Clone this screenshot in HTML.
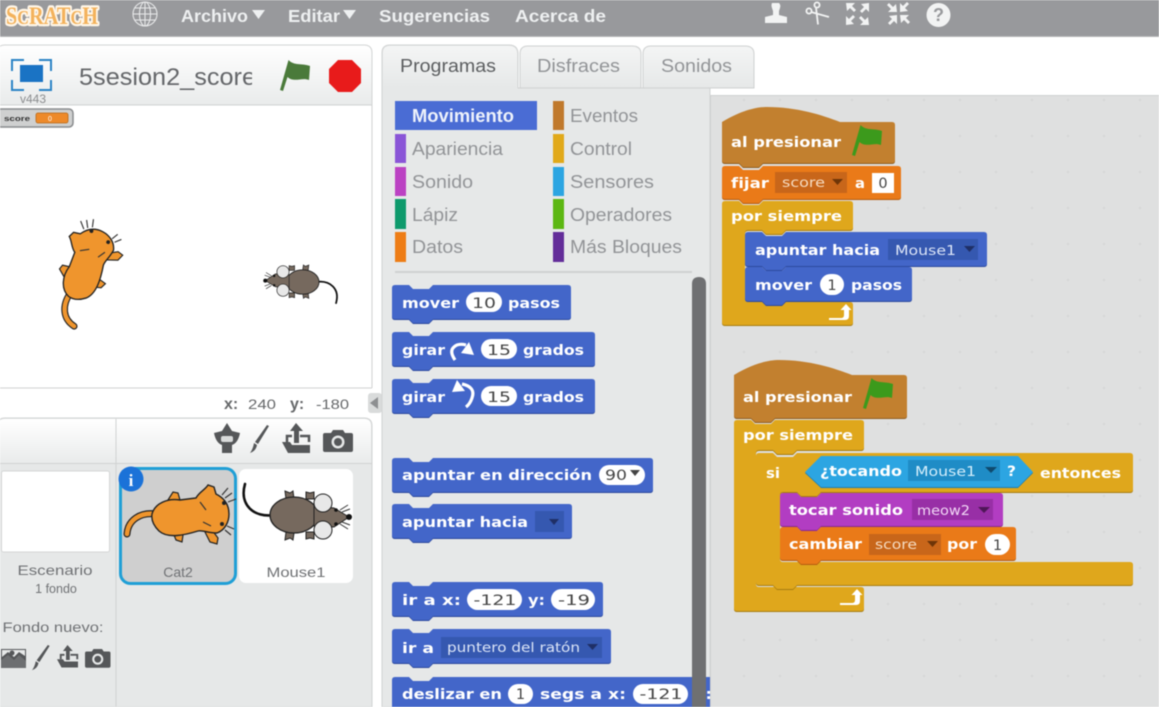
<!DOCTYPE html>
<html lang="es">
<head>
<meta charset="utf-8">
<title>Scratch</title>
<style>
html,body{margin:0;padding:0;width:1159px;height:707px;overflow:hidden;background:#fff}
svg{display:block;filter:blur(.5px)}
text{font-family:"Liberation Sans",sans-serif}
.b{font-family:"DejaVu Sans",sans-serif;font-weight:700;font-size:14px;fill:#fff}
.f{font-family:"DejaVu Sans",sans-serif;font-size:14.500px;fill:#444;text-anchor:middle}
.d{font-family:"DejaVu Sans",sans-serif;font-size:13px}
.m{font-weight:700;font-size:17.500px;fill:#eef0f1}
.c{font-size:18px;fill:#929497}
.l{font-size:14px;fill:#707275;text-anchor:middle}
.mo{filter:drop-shadow(.5px 1px 0 #2d4a9e)}
.ev{filter:drop-shadow(.5px 1px 0 #8f5e22)}
.or{filter:drop-shadow(.5px 1px 0 #b35c10)}
.co{filter:drop-shadow(.5px 1px 0 #a67c12)}
.so{filter:drop-shadow(.5px 1px 0 #86298f)}
.se{filter:drop-shadow(.5px 1px 0 #1c7cb0)}
</style>
</head>
<body>
<svg width="1159" height="707" viewBox="0 0 1159 707" xmlns="http://www.w3.org/2000/svg">
<defs>
<linearGradient id="hd" x1="0" y1="0" x2="0" y2="1"><stop offset="0" stop-color="#fff"/><stop offset="1" stop-color="#e9ebeb"/></linearGradient>
<linearGradient id="tb" x1="0" y1="0" x2="0" y2="1"><stop offset="0" stop-color="#f4f5f5"/><stop offset="1" stop-color="#e6e8e8"/></linearGradient>
<pattern id="dots" width="36" height="36" patternUnits="userSpaceOnUse" x="6" y="10"><rect width="36" height="36" fill="#dfe0e0"/><rect x="17" y="17" width="2" height="2" fill="#d5d6d6"/></pattern>
<clipPath id="tc"><rect x="70" y="50" width="182" height="50"/></clipPath>
<clipPath id="pal"><rect x="382" y="88" width="328" height="619"/></clipPath>
<path id="flag" d="M0,0L8.500,-30C14,-24 22,-27 30,-24L29,-10C22,-13 14,-7 7.500,-13L3,1Z"/>
<path id="loop" d="M0,13h12q3 0 3-3V5h-3.500l5.500-6 5.500 6H20v6q0 4-4 4H0z" fill="#fff"/>
<g id="cam" fill="#555759"><path d="M8,3l2-3h10l2 3h6q2 0 2 2v15q0 2-2 2H2q-2 0-2-2V5q0-2 2-2z"/><circle cx="15" cy="12" r="6.500" fill="#e6e8e8"/><circle cx="15" cy="12" r="4" fill="#555759"/></g>
<g id="upl"><path d="M14,0L21,8H17V20H12V8H8z" fill="#555759"/><path d="M10,13H5V19M18,13H27V19" fill="none" stroke="#555759" stroke-width="2.500"/><path d="M0,19H8L10,22H28V30H6z" fill="#555759"/></g>
<path id="brush" d="M17,0L19,1 8,19 5,17zM4,18l3,2Q6,26 0,28Q3,24 4,18z" fill="#555759"/>
<g id="cat">
<path d="M127,534C128,520 140,512 156,514" fill="none" stroke="#222" stroke-width="7" stroke-linecap="round"/>
<path d="M127,534C128,520 140,512 156,514" fill="none" stroke="#ef952d" stroke-width="4.600" stroke-linecap="round"/>
<path d="M168,500l5-8 5,1 2,7zM172,530l4,10 6,2 1-7zM205,532l5,10 7,2 1-6-6-8z" fill="#ef952d" stroke="#222" stroke-width="1.200"/>
<path d="M152,514C155,503 168,498 180,500L196,498C199,492 205,490 208,485L214,487 216,494C224,498 229,504 229,514 229,522 225,530 217,533 208,533 203,530 198,531 185,535 168,539 159,531 154,526 151,520 152,514Z" fill="#ef952d" stroke="#222" stroke-width="1.400"/>
<path d="M200,502l6,8M203,522l8,4M225,498l7-5M228,502l8-3M227,526l7,3M225,530l6,5M222,495l6-7" stroke="#333" stroke-width="1.200" fill="none"/>
<circle cx="224" cy="503" r="2" fill="#222"/><circle cx="222" cy="524" r="2" fill="#222"/>
</g>
<g id="mouse">
<path d="M245,484C239,505 254,518 274,515" fill="none" stroke="#111" stroke-width="2.600" stroke-linecap="round"/>
<path d="M286,499l-1-8 5 2 3-2 1 8zM306,499l0-7 4 1 4-1 0 7zM286,532l-1 8 5-2 3 2 1-7zM306,532l0 7 4-1 4 1 0-7z" fill="#76695e" stroke="#222" stroke-width="1"/>
<ellipse cx="294" cy="515" rx="24" ry="18" fill="#76695e" stroke="#222" stroke-width="1.300"/>
<path d="M314,506L334,508 349,517 334,527 314,526Z" fill="#76695e" stroke="#222" stroke-width="1"/>
<circle cx="323" cy="503" r="9" fill="#e8e8e8" stroke="#222" stroke-width="1"/>
<circle cx="323" cy="530" r="9" fill="#e8e8e8" stroke="#222" stroke-width="1"/>
<circle cx="349" cy="517" r="3" fill="#111"/><circle cx="336" cy="510" r="1.800" fill="#111"/><circle cx="336" cy="524" r="1.800" fill="#111"/>
<path d="M340,510l8-5M342,512l8-3M340,524l8 5M342,522l8 3" stroke="#333" stroke-width="1"/>
</g>
</defs>

<!-- top bar -->
<rect width="1159" height="36" fill="#98999c"/>
<rect y="36" width="1159" height="1" fill="#b5b6b8"/>
<text x="6" y="24" font-size="25" textLength="92" lengthAdjust="spacingAndGlyphs" style="font-family:'Liberation Serif',serif;font-weight:700;fill:#f3b25c;stroke:#fff6e8;stroke-width:4.500;paint-order:stroke;stroke-linejoin:round">S<tspan font-size="20">C</tspan>RAT<tspan font-size="20">C</tspan>H</text>
<g fill="none" stroke="#e8e9ea" stroke-width="1.100"><circle cx="145" cy="14" r="12"/><ellipse cx="145" cy="14" rx="5.500" ry="12"/><path d="M145,2v24M133,14h24M135,8h20M135,20h20"/></g>
<text class="m" x="181" y="22" textLength="67" lengthAdjust="spacingAndGlyphs">Archivo</text>
<path d="M252,10h13l-6.500,9z" fill="#eef0f1"/>
<text class="m" x="288" y="22" textLength="52" lengthAdjust="spacingAndGlyphs">Editar</text>
<path d="M343,10h13l-6.500,9z" fill="#eef0f1"/>
<text class="m" x="379" y="22" textLength="111" lengthAdjust="spacingAndGlyphs">Sugerencias</text>
<text class="m" x="515" y="22" textLength="91" lengthAdjust="spacingAndGlyphs">Acerca de</text>
<!-- tool icons -->
<g fill="#f2f3f3">
<path d="M772,3h7q2 2 1 5l-1 3v4l8 2v6h-22v-6l8-2v-4l-1-3q-1-3 0-5z"/>
<g fill="none" stroke="#f2f3f3" stroke-width="1.800"><circle cx="809" cy="11" r="2.600"/><circle cx="817" cy="5" r="2.600"/><path d="M811,12l18 5M816,7.500l2 17"/></g>
<path d="M846,3h9l-3 3 4 4-2 2-4-4-3 3zM869,3v9l-3-3-4 4-2-2 4-4-3-3zM846,25v-9l3 3 4-4 2 2-4 4 3 3zM869,25h-9l3-3-4-4 2-2 4 4 3-3z"/>
<path d="M897,12h-9l3-3-4-4 2-2 4 4 3-3zM900,12V3l3 3 4-4 2 2-4 4 3 3zM897,15v9l-3-3-4 4-2-2 4-4-3-3zM900,15h9l-3 3 4 4-2 2-4-4-3 3z"/>
<circle cx="938.500" cy="15" r="12"/>
</g>
<text x="938.500" y="21" font-size="18" font-weight="700" text-anchor="middle" fill="#98999c">?</text>

<!-- stage panel -->
<path d="M-3,105V53q0-8 8-8H364q8 0 8 8V105z" fill="url(#hd)" stroke="#d2d4d4"/>
<rect x="-1" y="105" width="373" height="283" fill="#fff"/>
<path d="M0,105H372M372,105V388M0,388H372" stroke="#d0d2d2" fill="none"/>
<rect x="20" y="65" width="23" height="17" fill="#1a73c4"/>
<path d="M12,71V60H24M39,60H51V71M12,80V90H24M39,90H51V80" fill="none" stroke="#2b84c6" stroke-width="2"/>
<text x="33" y="103" font-size="12" text-anchor="middle" fill="#8a8c8e">v443</text>
<g clip-path="url(#tc)"><text x="79" y="85" font-size="24" fill="#65676a" textLength="177" lengthAdjust="spacingAndGlyphs">5sesion2_score</text></g>
<use href="#flag" x="280" y="90" fill="#4a7a3a"/>
<path d="M338,60h14l9,9v14l-9,9h-14l-9-9V69z" fill="#e81b1b"/>
<rect x="-3" y="109" width="76" height="18" rx="4" fill="#cfd0d0" stroke="#8a8c8e" stroke-width="1.500"/>
<text x="4" y="121" font-size="7" font-weight="700" fill="#333" textLength="26" lengthAdjust="spacingAndGlyphs">score</text>
<rect x="36" y="113" width="32" height="10" rx="2" fill="#ee8a2a" stroke="#b86a1a" stroke-width=".8"/>
<text x="50" y="121" font-size="7" fill="#fff" text-anchor="middle">0</text>

<use href="#cat" transform="translate(81,275) rotate(-62) scale(.95) translate(-178,-515)"/>
<use href="#mouse" transform="translate(300,282) rotate(180) scale(.68) translate(-298,-515)"/>

<text x="224" y="409" font-size="16" font-weight="700" fill="#66686a">x:</text>
<text x="248" y="409" font-size="14" fill="#66686a" textLength="28" lengthAdjust="spacingAndGlyphs">240</text>
<text x="290" y="409" font-size="16" font-weight="700" fill="#66686a">y:</text>
<text x="316" y="409" font-size="14" fill="#66686a" textLength="33" lengthAdjust="spacingAndGlyphs">-180</text>
<rect x="368" y="393" width="14" height="20" rx="3" fill="#d9dbdb"/>
<path d="M378,397v12l-8-6z" fill="#8d8f91"/>

<!-- sprites panel -->
<path d="M-3,707V426q0-8 8-8H364q8 0 8 8V707z" fill="#e6e8e8" stroke="#d0d2d2"/>
<path d="M-2,463V426q0-7 7-7H364q7 0 7 7V463z" fill="url(#hd)"/>
<path d="M0,463.500H372M116,419V707" stroke="#d0d2d2"/>
<!-- sprite toolbar icons -->
<path d="M227,423L232,431 240,433Q238,443 232,445L232,453H222L222,445Q216,443 214,433L222,431z" fill="#555759"/>
<rect x="221" y="436" width="12" height="6" rx="2" fill="#d9dbdb"/>
<use href="#brush" x="250" y="425"/>
<use href="#upl" x="282" y="423"/>
<use href="#cam" x="323" y="430"/>

<rect x="1.500" y="471" width="108" height="81" rx="2" fill="#fff" stroke="#d4d6d6"/>
<text class="l" x="55" y="575" textLength="75" lengthAdjust="spacingAndGlyphs">Escenario</text>
<text x="56" y="593" font-size="12.500" fill="#707275" text-anchor="middle">1 fondo</text>
<text x="53" y="632" font-size="14" fill="#707275" text-anchor="middle" textLength="101" lengthAdjust="spacingAndGlyphs">Fondo nuevo:</text>
<rect x="1" y="649" width="25" height="19" fill="#555759"/>
<path d="M1,668V660l7-5 6,5 5-5 7,6v7z" fill="#6d6f71"/><path d="M2,650h23v6l-6-4-5 5-6-5-6 5z" fill="#e6e8e8"/><circle cx="12" cy="653" r="2.500" fill="#555759"/>
<use href="#brush" transform="translate(32,645) scale(.93,.9)"/>
<use href="#upl" transform="translate(57,645) scale(.75)"/>
<use href="#cam" transform="translate(85,649) scale(.85)"/>

<rect x="120.500" y="468.500" width="115" height="115" rx="10" fill="#cfcfcf" stroke="#1f9fd6" stroke-width="3"/>
<use href="#cat"/>
<text class="l" x="178" y="577">Cat2</text>
<circle cx="131" cy="479" r="12.500" fill="#1b72d8"/>
<text x="131" y="486" font-size="17" font-weight="700" text-anchor="middle" fill="#fff" style="font-family:'Liberation Serif',serif">i</text>
<rect x="239" y="469" width="114" height="114" rx="7" fill="#fff"/>
<use href="#mouse"/>
<text class="l" x="296" y="577" textLength="59" lengthAdjust="spacingAndGlyphs">Mouse1</text>

<!-- tabs -->
<path d="M382,707V53q0-8 8-8H509q9 0 9 9V88H710V707z" fill="#e6e8e8" stroke="#d0d2d2"/>
<path d="M383,88V53q0-7 7-7H509q8 0 8 8V88z" fill="url(#tb)"/>
<path d="M520,88V54q0-8 8-8H632q9 0 9 8V88z" fill="url(#tb)" stroke="#cfd1d1"/>
<path d="M643,88V54q0-8 8-8H745q9 0 9 8V88z" fill="url(#tb)" stroke="#cfd1d1"/>
<text x="400" y="72" font-size="18" fill="#5c5e60" textLength="96" lengthAdjust="spacingAndGlyphs">Programas</text>
<text x="537" y="72" font-size="18" fill="#929497" textLength="83" lengthAdjust="spacingAndGlyphs">Disfraces</text>
<text x="661" y="72" font-size="18" fill="#929497" textLength="71" lengthAdjust="spacingAndGlyphs">Sonidos</text>

<!-- categories -->
<rect x="395" y="101" width="142" height="29" fill="#4a6cd4"/>
<text x="412" y="122" font-size="18" font-weight="700" fill="#eef2fb" textLength="102" lengthAdjust="spacingAndGlyphs">Movimiento</text>
<rect x="395" y="134" width="11" height="29" fill="#8a55d7"/><text class="c" x="412" y="155" textLength="91" lengthAdjust="spacingAndGlyphs">Apariencia</text>
<rect x="395" y="167" width="11" height="29" fill="#bb42c3"/><text class="c" x="412" y="188" textLength="61" lengthAdjust="spacingAndGlyphs">Sonido</text>
<rect x="395" y="199" width="11" height="30" fill="#0e9a6c"/><text class="c" x="412" y="221" textLength="46" lengthAdjust="spacingAndGlyphs">Lápiz</text>
<rect x="395" y="232" width="11" height="30" fill="#ee7d16"/><text class="c" x="412" y="253" textLength="51" lengthAdjust="spacingAndGlyphs">Datos</text>
<rect x="553" y="101" width="11" height="29" fill="#c0792c"/><text class="c" x="570" y="122" textLength="68" lengthAdjust="spacingAndGlyphs">Eventos</text>
<rect x="553" y="134" width="11" height="29" fill="#e1a91a"/><text class="c" x="570" y="155" textLength="62" lengthAdjust="spacingAndGlyphs">Control</text>
<rect x="553" y="167" width="11" height="29" fill="#2ca5e2"/><text class="c" x="570" y="188" textLength="84" lengthAdjust="spacingAndGlyphs">Sensores</text>
<rect x="553" y="199" width="11" height="30" fill="#5cb712"/><text class="c" x="570" y="221" textLength="102" lengthAdjust="spacingAndGlyphs">Operadores</text>
<rect x="553" y="232" width="11" height="30" fill="#632d99"/><text class="c" x="570" y="253" textLength="112" lengthAdjust="spacingAndGlyphs">Más Bloques</text>
<rect x="395" y="271" width="297" height="2" fill="#cfd1d1"/>

<!-- palette blocks -->
<g clip-path="url(#pal)">
<g fill="#4366c9">
<path class="mo" transform="translate(392,285)" d="M0,3q0-3 3-3h14l4 4h16l4-4h135q3 0 3 3v28q0 3-3 3H41l-4 4h-16l-4-4H3q-3 0-3-3z"/>
<path class="mo" transform="translate(392,332)" d="M0,3q0-3 3-3h14l4 4h16l4-4h159q3 0 3 3v28q0 3-3 3H41l-4 4h-16l-4-4H3q-3 0-3-3z"/>
<path class="mo" transform="translate(392,379)" d="M0,3q0-3 3-3h14l4 4h16l4-4h159q3 0 3 3v28q0 3-3 3H41l-4 4h-16l-4-4H3q-3 0-3-3z"/>
<path class="mo" transform="translate(392,458)" d="M0,3q0-3 3-3h14l4 4h16l4-4h217q3 0 3 3v28q0 3-3 3H41l-4 4h-16l-4-4H3q-3 0-3-3z"/>
<path class="mo" transform="translate(392,504)" d="M0,3q0-3 3-3h14l4 4h16l4-4h136q3 0 3 3v28q0 3-3 3H41l-4 4h-16l-4-4H3q-3 0-3-3z"/>
<path class="mo" transform="translate(392,582)" d="M0,3q0-3 3-3h14l4 4h16l4-4h167q3 0 3 3v28q0 3-3 3H41l-4 4h-16l-4-4H3q-3 0-3-3z"/>
<path class="mo" transform="translate(392,629)" d="M0,3q0-3 3-3h14l4 4h16l4-4h175q3 0 3 3v28q0 3-3 3H41l-4 4h-16l-4-4H3q-3 0-3-3z"/>
<path transform="translate(392,677)" d="M0,3q0-3 3-3h14l4 4h16l4-4h280v40H0z"/>
</g>
<text class="b" x="402" y="308" textLength="57" lengthAdjust="spacingAndGlyphs">mover</text>
<rect x="466" y="292" width="36" height="20" rx="10" fill="#fff"/><text class="f" x="484" y="308" textLength="24" lengthAdjust="spacingAndGlyphs">10</text>
<text class="b" x="508" y="308" textLength="52" lengthAdjust="spacingAndGlyphs">pasos</text>

<text class="b" x="402" y="355" textLength="43" lengthAdjust="spacingAndGlyphs">girar</text>
<path d="M455,360Q449,351 454,347Q458,343 466,345" fill="none" stroke="#fff" stroke-width="3.200"/><path d="M469,342L474,355 461,353z" fill="#fff"/>
<rect x="481" y="339" width="36" height="20" rx="10" fill="#fff"/><text class="f" x="499" y="355" textLength="24" lengthAdjust="spacingAndGlyphs">15</text>
<text class="b" x="523" y="355" textLength="61" lengthAdjust="spacingAndGlyphs">grados</text>

<text class="b" x="402" y="402" textLength="43" lengthAdjust="spacingAndGlyphs">girar</text>
<path d="M462,384Q476,387 472,398Q470,404 466,407" fill="none" stroke="#fff" stroke-width="3.200"/><path d="M457,380L452,392 465,391z" fill="#fff"/>
<rect x="481" y="386" width="36" height="20" rx="10" fill="#fff"/><text class="f" x="499" y="402" textLength="24" lengthAdjust="spacingAndGlyphs">15</text>
<text class="b" x="523" y="402" textLength="61" lengthAdjust="spacingAndGlyphs">grados</text>

<text class="b" x="402" y="480" textLength="190" lengthAdjust="spacingAndGlyphs">apuntar en dirección</text>
<rect x="599" y="465" width="46" height="20" rx="10" fill="#fff"/><text class="f" x="616" y="480" textLength="22" lengthAdjust="spacingAndGlyphs">90</text><path d="M630,470h10l-5,6z" fill="#444"/>

<text class="b" x="402" y="527" textLength="126" lengthAdjust="spacingAndGlyphs">apuntar hacia</text>
<rect x="535" y="511" width="29" height="21" fill="#3558b0"/><path d="M549,519h10l-5,6z" fill="#1f2f66"/>

<text class="b" x="402" y="605" textLength="59" lengthAdjust="spacingAndGlyphs">ir a x:</text>
<rect x="467" y="589" width="55" height="21" rx="10.500" fill="#fff"/><text class="f" x="495" y="605" textLength="43" lengthAdjust="spacingAndGlyphs">-121</text>
<text class="b" x="528" y="605" textLength="17" lengthAdjust="spacingAndGlyphs">y:</text>
<rect x="551" y="589" width="44" height="21" rx="10.500" fill="#fff"/><text class="f" x="574" y="605" textLength="32" lengthAdjust="spacingAndGlyphs">-19</text>

<text class="b" x="402" y="653" textLength="32" lengthAdjust="spacingAndGlyphs">ir a</text>
<rect x="441" y="637" width="161" height="21" fill="#3558b0"/>
<text class="d" x="447" y="652" fill="#dce5f7" textLength="133" lengthAdjust="spacingAndGlyphs">puntero del ratón</text><path d="M587,644h11l-5.500,6z" fill="#1f2f66"/>

<text class="b" x="402" y="699" textLength="100" lengthAdjust="spacingAndGlyphs">deslizar en</text>
<rect x="508" y="684" width="25" height="20" rx="10" fill="#fff"/><text class="f" x="520.500" y="699">1</text>
<text class="b" x="540" y="699" textLength="86" lengthAdjust="spacingAndGlyphs">segs a x:</text>
<rect x="633" y="684" width="55" height="20" rx="10" fill="#fff"/><text class="f" x="661" y="699" textLength="43" lengthAdjust="spacingAndGlyphs">-121</text>
<text class="b" x="695" y="699" textLength="17" lengthAdjust="spacingAndGlyphs">y:</text>
</g>
<path d="M692,707V284q0-7 7-7t7 7V707z" fill="#6f7072"/>

<!-- script area -->
<rect x="710" y="95" width="449" height="612" fill="url(#dots)"/>
<path d="M710.500,707V95.500H1159" fill="none" stroke="#cfd1d1"/>

<!-- script 1 -->
<path class="ev" fill="#c2802f" transform="translate(722,107)" d="M0,15C20,3 35,0 45,0C75,0 100,8 118,15H170q3 0 3 3V53q0 3-3 3H41l-4 4h-16l-4-4H3q-3 0-3-3z"/>
<text class="b" x="731" y="147" textLength="110" lengthAdjust="spacingAndGlyphs">al presionar</text>
<use href="#flag" x="852" y="155" fill="#3c9a1c"/>
<path class="co" fill="#dfa71c" transform="translate(722,201)" d="M0,3q0-3 3-3h14l4 4h16l4-4h87q3 0 3 3v23q0 3-3 3H64l-4 4h-16l-4-4H26q-3 0-3 3V98q0 3 3 3H128q3 0 3 3v17q0 3-3 3H3q-3 0-3-3z"/>
<path class="or" fill="#ea7a18" transform="translate(722,166)" d="M0,3q0-3 3-3h14l4 4h16l4-4h135q3 0 3 3v27q0 3-3 3H41l-4 4h-16l-4-4H3q-3 0-3-3z"/>
<text class="b" x="731" y="188" textLength="38" lengthAdjust="spacingAndGlyphs">fijar</text>
<rect x="775" y="172" width="72" height="21" fill="#c8661a"/>
<text class="d" x="782" y="187" fill="#f6dcc2" textLength="43" lengthAdjust="spacingAndGlyphs">score</text><path d="M832,179h11l-5.500,6z" fill="#6e3508"/>
<text class="b" x="855" y="188" textLength="10" lengthAdjust="spacingAndGlyphs">a</text>
<rect x="872" y="173" width="22" height="20" fill="#fff"/><text class="f" x="883" y="188">0</text>
<text class="b" x="731" y="221" textLength="111" lengthAdjust="spacingAndGlyphs">por siempre</text>
<use href="#loop" x="829" y="305"/>
<path class="mo" fill="#4366c9" transform="translate(745,232)" d="M0,3q0-3 3-3h14l4 4h16l4-4h198q3 0 3 3v28q0 3-3 3H41l-4 4h-16l-4-4H3q-3 0-3-3z"/>
<text class="b" x="755" y="255" textLength="125" lengthAdjust="spacingAndGlyphs">apuntar hacia</text>
<rect x="888" y="239" width="90" height="21" fill="#3558b0"/>
<text class="d" x="895" y="255" fill="#dce5f7" textLength="61" lengthAdjust="spacingAndGlyphs">Mouse1</text><path d="M964,246h11l-5.500,6z" fill="#1f2f66"/>
<path class="mo" fill="#4366c9" transform="translate(745,267)" d="M0,3q0-3 3-3h14l4 4h16l4-4h123q3 0 3 3v28q0 3-3 3H41l-4 4h-16l-4-4H3q-3 0-3-3z"/>
<text class="b" x="755" y="290" textLength="57" lengthAdjust="spacingAndGlyphs">mover</text>
<rect x="820" y="274" width="24" height="21" rx="10.500" fill="#fff"/><text class="f" x="832" y="290">1</text>
<text class="b" x="851" y="290" textLength="51" lengthAdjust="spacingAndGlyphs">pasos</text>

<!-- script 2 -->
<path class="ev" fill="#c2802f" transform="translate(734,360)" d="M0,15C20,3 35,0 45,0C75,0 100,8 118,15H170q3 0 3 3V55q0 3-3 3H41l-4 4h-16l-4-4H3q-3 0-3-3z"/>
<text class="b" x="743" y="402" textLength="109" lengthAdjust="spacingAndGlyphs">al presionar</text>
<use href="#flag" x="863" y="408" fill="#3c9a1c"/>
<path class="co" fill="#dfa71c" transform="translate(734,420)" d="M0,3q0-3 3-3h14l4 4h16l4-4h86q3 0 3 3v24q0 3-3 3H63l-4 4h-16l-4-4H25q-3 0-3 3V164q0 3 3 3H127q3 0 3 3v18q0 3-3 3H3q-3 0-3-3z"/>
<text class="b" x="743" y="440" textLength="110" lengthAdjust="spacingAndGlyphs">por siempre</text>
<use href="#loop" x="840" y="590"/>
<path class="co" fill="#dfa71c" transform="translate(756,453)" d="M0,3q0-3 3-3h14l4 4h16l4-4H374q3 0 3 3V36q0 3-3 3H65l-4 4h-16l-4-4H27q-3 0-3 3V106q0 3 3 3H374q3 0 3 3v17q0 3-3 3H41l-4 4h-16l-4-4H3q-3 0-3-3z"/>
<text class="b" x="766" y="478" textLength="14" lengthAdjust="spacingAndGlyphs">si</text>
<path class="se" fill="#2ca5e2" d="M805,472l16-16H1018l15,16-15,15H821z"/>
<text class="b" x="820" y="476" textLength="82" lengthAdjust="spacingAndGlyphs">¿tocando</text>
<rect x="908" y="460" width="92" height="21" fill="#1f8cc6"/>
<text class="d" x="915" y="476" fill="#d4eefb" textLength="61" lengthAdjust="spacingAndGlyphs">Mouse1</text><path d="M985,467h12l-6,6z" fill="#0f4a6e"/>
<text class="b" x="1007" y="476" textLength="9" lengthAdjust="spacingAndGlyphs">?</text>
<text class="b" x="1040" y="478" textLength="81" lengthAdjust="spacingAndGlyphs">entonces</text>
<path class="so" fill="#b23dc2" transform="translate(780,493)" d="M0,3q0-3 3-3h14l4 4h16l4-4h179q3 0 3 3v27q0 3-3 3H41l-4 4h-16l-4-4H3q-3 0-3-3z"/>
<text class="b" x="789" y="515" textLength="114" lengthAdjust="spacingAndGlyphs">tocar sonido</text>
<rect x="912" y="499" width="81" height="21" fill="#982fa6"/>
<text class="d" x="917" y="515" fill="#f2d8f6" textLength="53" lengthAdjust="spacingAndGlyphs">meow2</text><path d="M978,507h12l-6,6z" fill="#4f1658"/>
<path class="or" fill="#ea7a18" transform="translate(780,527)" d="M0,3q0-3 3-3h14l4 4h16l4-4h192q3 0 3 3v27q0 3-3 3H41l-4 4h-16l-4-4H3q-3 0-3-3z"/>
<text class="b" x="789" y="549" textLength="73" lengthAdjust="spacingAndGlyphs">cambiar</text>
<rect x="869" y="534" width="72" height="21" fill="#c8661a"/>
<text class="d" x="875" y="549" fill="#f6dcc2" textLength="42" lengthAdjust="spacingAndGlyphs">score</text><path d="M927,541h11l-5.500,6z" fill="#6e3508"/>
<text class="b" x="947" y="549" textLength="30" lengthAdjust="spacingAndGlyphs">por</text>
<rect x="985" y="534" width="25" height="21" rx="10.500" fill="#fff"/><text class="f" x="997.500" y="550">1</text>
</svg>
</body>
</html>
